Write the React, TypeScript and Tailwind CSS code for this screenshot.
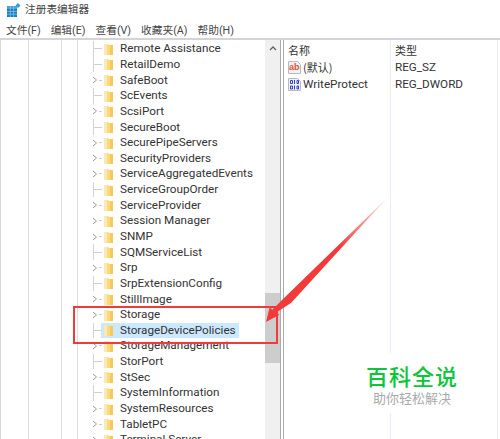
const rows: [string, boolean][] = [
  ['Remote Assistance', false],
  ['RetailDemo', false],
  ['SafeBoot', true],
  ['ScEvents', false],
  ['ScsiPort', true],
  ['SecureBoot', false],
  ['SecurePipeServers', true],
  ['SecurityProviders', true],
  ['ServiceAggregatedEvents', true],
  ['ServiceGroupOrder', false],
  ['ServiceProvider', true],
  ['Session Manager', true],
  ['SNMP', true],
  ['SQMServiceList', false],
  ['Srp', true],
  ['SrpExtensionConfig', false],
  ['StillImage', true],
  ['Storage', true],
  ['StorageDevicePolicies', false],
  ['StorageManagement', true],
  ['StorPort', false],
  ['StSec', true],
  ['SystemInformation', false],
  ['SystemResources', true],
  ['TabletPC', true],
  ['Terminal Server', true],
];

const Folder = () => (
  <svg width="11" height="12" viewBox="0 0 11 12" className="shrink-0">
    <path d="M1 1h4l1 1h4v10H1z" fill="#fbd97e" />
    <path d="M1 1h3v11H1z" fill="#fae9b8" />
    <path d="M7 2h3v10H7z" fill="#f7ca55" />
  </svg>
);

const Guide = ({ x }: { x: string }) => (
  <div className={`absolute top-0 bottom-0 w-px bg-[#dedede] ${x}`} />
);

const AppIcon = () => (
  <svg width="14" height="14" viewBox="0 0 14 14">
    <path d="M0 3h10v11H0z" fill="#1b7fc4" />
    <path d="M0 3h10v3H0z" fill="#4aa3dc" />
    <path d="M3.300 3v11M6.600 3v11M0 8.500h10M0 11.200h10" stroke="#8cc6ea" strokeWidth="0.7" />
    <path d="M11 0l2.500 2.500L11 5 8.500 2.500z" fill="#2f9fd8" />
  </svg>
);

const StringIcon = () => (
  <svg width="15" height="15" viewBox="0 0 15 15" className="shrink-0">
    <path d="M1.500 1.500h9l3 3v9h-12z" fill="#f5f1ee" stroke="#b9b9c4" />
    <text x="2" y="10" fontSize="9" fontWeight="700" fill="#d9533a" fontFamily="Liberation Sans">ab</text>
  </svg>
);

const BinaryIcon = () => (
  <svg width="15" height="15" viewBox="0 0 15 15" className="shrink-0">
    <path d="M1.500 1.500h9l3 3v9h-12z" fill="#eef0fa" stroke="#b9b9c4" />
    <g fill="none" stroke="#3540c0" strokeWidth="1">
      <path d="M3.500 3.500h2v3h-2zM10 3.500h1.500v3H10zM7.500 3v4M3.500 9h2v3h-2zM7.500 8.500v4M10 9h1.500v3H10z" />
    </g>
  </svg>
);

export default function App() {
  return (
    <div className="relative w-[500px] h-[439px] overflow-hidden bg-white text-[#333] font-['Roboto','Noto_Sans_CJK_SC',sans-serif]">
      <div className="flex h-[17px] pt-[2px] items-center pl-[7px] gap-[4px]">
        <AppIcon />
        <span className="text-[10.7px] text-[#444] font-['Noto_Sans_CJK_SC',sans-serif]">注册表编辑器</span>
      </div>
      <div className="flex h-[21px] pt-[7px] items-center pl-[6px] gap-[10px] text-[10.7px] text-[#444] font-['Roboto','Noto_Sans_CJK_SC',sans-serif]">
        <span>文件(F)</span>
        <span>编辑(E)</span>
        <span>查看(V)</span>
        <span>收藏夹(A)</span>
        <span>帮助(H)</span>
      </div>
      <div className="flex h-[401px] border-t-2 border-[#d4d4d8]">
        <div className="relative w-[265px] pt-[1px] border-l border-[#d8d8d8] overflow-hidden">
          <Guide x="left-[27px]" />
          <Guide x="left-[60px]" />
          <Guide x="left-[76px]" />
          {rows.map(([name, expandable]) => (
            <div key={name} className="relative flex items-center h-[15.65px] text-[11.7px]">
              {expandable ? (
                <svg width="6" height="8" viewBox="0 0 6 8" className="absolute left-[91px]">
                  <path d="M1 1l3.500 3L1 7" fill="none" stroke="#9a9a9a" strokeWidth="1" />
                </svg>
              ) : (
                <div className="absolute left-[92px] top-0 bottom-0 w-px bg-[#d4d4d4]" />
              )}
              <div className={`absolute h-px bg-[#cfcfcf] ${expandable ? 'left-[98px] w-[3px]' : 'left-[93px] w-[8px]'}`} />
              <div className={`ml-[100px] flex items-center h-[15px] pl-[2px] pr-[3px] ${name === 'StorageDevicePolicies' ? 'bg-[#cce8ff]' : ''}`}>
                <Folder />
                <span className="ml-[6px] leading-[15px]">{name}</span>
              </div>
            </div>
          ))}
        </div>
        <div className="relative w-[15px] flex flex-col bg-[#f0f0f0]">
          <div className="h-[16px] flex items-center justify-center">
            <svg width="8" height="5" viewBox="0 0 8 5">
              <path d="M1 4l3-3 3 3" fill="none" stroke="#606060" strokeWidth="1.300" />
            </svg>
          </div>
          <div className="mt-[237px] h-[70px] bg-[#cdcdcd]" />
        </div>
        <div className="w-[4px] bg-white border-x border-[#a9a9ae]" />
        <div className="flex-1 relative text-[11.7px]">
          <div className="absolute left-[106px] top-0 bottom-0 border-l border-[#e8eef6]" />
          <div className="absolute left-[213px] top-0 bottom-0 border-l border-[#e8eef6]" />
          <div className="flex h-[19px] pt-[2px] items-center">
            <span className="w-[106px] pl-[4px] text-[11px] font-['Noto_Sans_CJK_SC',sans-serif]">名称</span>
            <span className="pl-[5px] text-[11px] font-['Noto_Sans_CJK_SC',sans-serif]">类型</span>
          </div>
          <div className="flex h-[17px] items-center">
            <div className="w-[106px] flex items-center pl-[3px] gap-[1px]"><StringIcon /><span className="text-[11px] font-['Noto_Sans_CJK_SC',sans-serif]">(默认)</span></div>
            <span className="pl-[5px]">REG_SZ</span>
          </div>
          <div className="flex h-[17px] items-center">
            <div className="w-[106px] flex items-center pl-[3px] gap-[1px]"><BinaryIcon /><span>WriteProtect</span></div>
            <span className="pl-[5px]">REG_DWORD</span>
          </div>
        </div>
      </div>

      <div className="absolute left-[73px] top-[306px] w-[205px] h-[38px] border-2 border-[#f23a3a]" />
      <svg className="absolute left-[260px] top-[190px]" width="135" height="140" viewBox="0 0 135 140">
        <defs>
          <linearGradient id="fade" x1="0" y1="1" x2="1" y2="0">
            <stop offset="0.6" stopColor="#f23a3a" />
            <stop offset="1" stopColor="#f23a3a" stopOpacity="0.1" />
          </linearGradient>
        </defs>
        <path d="M128 7L23 109 12 120 10 116 6 132 19 125 17 122 31 113z" fill="url(#fade)" />
      </svg>
      <div className="absolute left-[352px] top-[353px] w-[120px] h-[60px] bg-white flex flex-col items-center pt-[9px] font-['Noto_Sans_CJK_SC',sans-serif]">
        <span className="text-[22px] leading-[26px] font-medium tracking-[1px] text-[#0cc63a]">百科全说</span>
        <span className="text-[13px] leading-[16px] mt-[2px] text-[#aaaaaa]">助你轻松解决</span>
      </div>
    </div>
  );
}
